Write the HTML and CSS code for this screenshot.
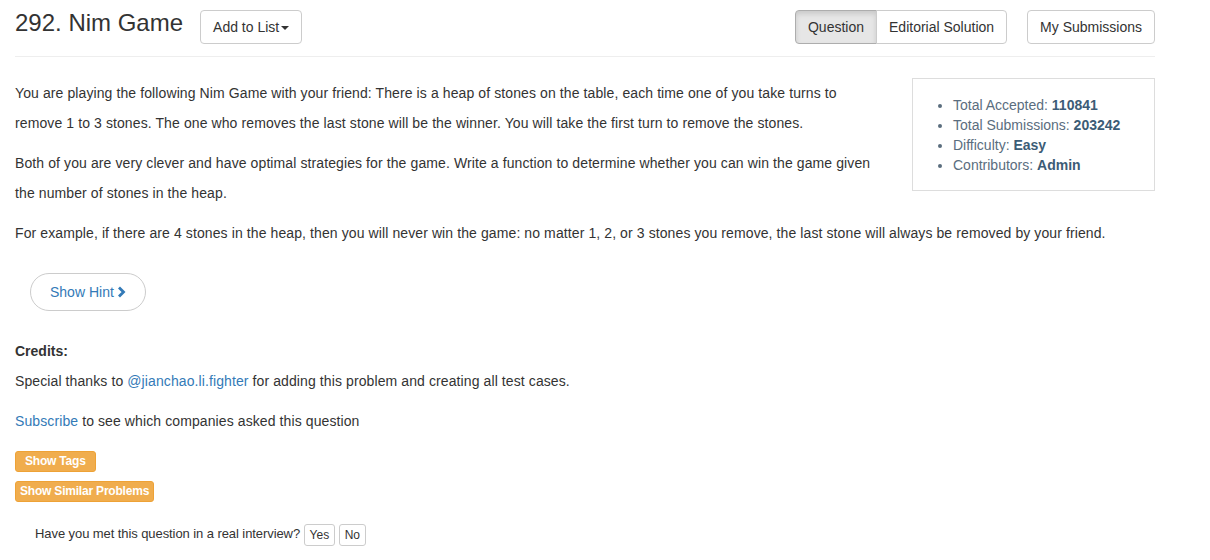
FILE: index.html
```html
<!DOCTYPE html>
<html>
<head>
<meta charset="utf-8">
<title>292. Nim Game</title>
<link rel="stylesheet" href="styles.css">
</head>
<body>
<div class="page">
  <div class="header">
    <h3 class="title">292. Nim Game</h3>
    <button class="btn add-list">Add to List<span class="caret"></span></button>
    <div class="spacer"></div>
    <div class="btn-group">
      <button class="btn active">Question</button>
      <button class="btn">Editorial Solution</button>
    </div>
    <button class="btn subs">My Submissions</button>
  </div>

  <div class="content">
    <div class="stats">
      <ul>
        <li>Total Accepted: <strong>110841</strong></li>
        <li>Total Submissions: <strong>203242</strong></li>
        <li>Difficulty: <strong>Easy</strong></li>
        <li>Contributors: <strong>Admin</strong></li>
      </ul>
    </div>
    <p class="text">You are playing the following Nim Game with your friend: There is a heap of stones on the table, each time one of you take turns to<br>remove 1 to 3 stones. The one who removes the last stone will be the winner. You will take the first turn to remove the stones.</p>
    <p class="text">Both of you are very clever and have optimal strategies for the game. Write a function to determine whether you can win the game given the number of stones in the heap.</p>
    <p class="text">For example, if there are 4 stones in the heap, then you will never win the game: no matter 1, 2, or 3 stones you remove, the last stone will always be removed by your friend.</p>

    <button class="hint-btn">Show Hint <svg class="chev" width="9" height="12" viewBox="0 0 9 12"><polyline points="2,1.5 6.5,6 2,10.5" fill="none" stroke="#337ab7" stroke-width="2.8" stroke-linejoin="miter"/></svg></button>

    <div class="credits-title">Credits:</div>
    <div class="credits text">Special thanks to <a href="#">@jianchao.li.fighter</a> for adding this problem and creating all test cases.</div>

    <div class="subscribe text"><a href="#">Subscribe</a> to see which companies asked this question</div>

    <div class="tag-row"><button class="btn-warn tags">Show Tags</button></div>
    <div class="tag-row"><button class="btn-warn similar">Show Similar Problems</button></div>

    <div class="interview">Have you met this question in a real interview? <button class="btn-sm">Yes</button> <button class="btn-sm">No</button></div>
  </div>
</div>
</body>
</html>
```

FILE: styles.css
```css
* { box-sizing: border-box; }
body {
  margin: 0;
  font-family: "Liberation Sans", Arial, Helvetica, sans-serif;
  font-size: 14px;
  color: #333;
  background: #fff;
}
a { color: #337ab7; text-decoration: none; }
.page {
  width: 1170px;
  padding: 0 15px;
}
.header {
  display: flex;
  align-items: flex-start;
  padding-top: 10px;
  padding-bottom: 12px;
  border-bottom: 1px solid #eee;
}
.title {
  margin: 0;
  font-size: 24px;
  line-height: 26px;
  font-weight: 500;
  color: #333;
}
.spacer { flex: 1; }
.btn {
  font-family: inherit;
  font-size: 14px;
  line-height: 20px;
  padding: 6px 12px;
  color: #333;
  background: #fff;
  border: 1px solid #ccc;
  border-radius: 4px;
  height: 34px;
  margin: 0;
}
.add-list {
  margin-left: 17px;
}
.caret {
  display: inline-block;
  width: 0;
  height: 0;
  margin-left: 2px;
  vertical-align: middle;
  border-top: 4px solid #333;
  border-left: 4px solid transparent;
  border-right: 4px solid transparent;
}
.btn-group { display: flex; }
.btn-group .btn:first-child {
  border-top-right-radius: 0;
  border-bottom-right-radius: 0;
}
.btn-group .btn:last-child {
  border-top-left-radius: 0;
  border-bottom-left-radius: 0;
  margin-left: -1px;
}
.btn.active {
  background: #e6e6e6;
  border-color: #adadad;
  box-shadow: inset 0 3px 5px rgba(0,0,0,.125);
}
.subs { margin-left: 20px; }

.content {
  padding-top: 21px;
}
.text { letter-spacing: 0.1px; }
.content p {
  margin: 0 0 10px;
  line-height: 30px;
}
.stats {
  float: right;
  width: 243px;
  margin-left: 25px;
  border: 1px solid #ddd;
  padding: 16px 10px 15px 0;
  color: #5a6d7e;
}
.stats ul {
  margin: 0;
  padding-left: 40px;
  line-height: 20px;
}
.stats strong { color: #3c5c76; }

.hint-btn {
  display: inline-flex;
  align-items: center;
  gap: 3px;
  margin: 15px 0 0 15px;
  height: 38px;
  padding: 0 19px;
  font-family: inherit;
  font-size: 14px;
  color: #337ab7;
  background: #fff;
  border: 1px solid #ccc;
  border-radius: 19px;
}
.chev { display: block; }

.credits-title {
  font-weight: bold;
  line-height: 20px;
  margin-top: 30px;
}
.credits {
  line-height: 20px;
  margin-top: 10px;
}
.subscribe {
  line-height: 20px;
  margin-top: 20px;
}
.tag-row { line-height: 0; }
.btn-warn {
  font-family: inherit;
  font-size: 12px;
  font-weight: bold;
  letter-spacing: -0.2px;
  line-height: 19px;
  height: 21px;
  color: #fff;
  background: #f0ad4e;
  border: 1px solid #eea236;
  border-radius: 3px;
  margin: 0;
}
.tags { padding: 0 9px; margin-top: 20px; }
.similar { padding: 0 4px; margin-top: 9px; }
.interview {
  margin-top: 21px;
  padding-left: 20px;
  font-size: 13px;
  letter-spacing: -0.08px;
  line-height: 22px;
}
.btn-sm {
  font-family: inherit;
  font-size: 12px;
  line-height: 18px;
  height: 22px;
  padding: 1px 5px;
  color: #333;
  background: #fff;
  border: 1px solid #ccc;
  border-radius: 3px;
  margin: 0;
  vertical-align: middle;
}
```
